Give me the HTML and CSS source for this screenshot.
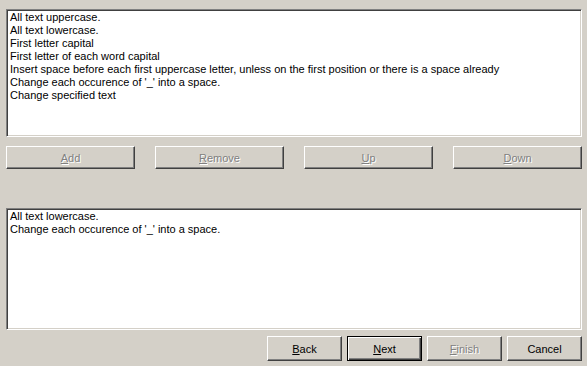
FILE: index.html
```html
<!DOCTYPE html>
<html lang="en">
<head>
    <meta charset="UTF-8">
    <title>Text Conversion Wizard</title>
    <link rel="stylesheet" href="styles.css">
</head>
<body>
    <div class="wizard">
        <ul class="listbox list-top">
            <li>All text uppercase.</li>
            <li>All text lowercase.</li>
            <li>First letter capital</li>
            <li>First letter of each word capital</li>
            <li>Insert space before each first uppercase letter, unless on the first position or there is a space already</li>
            <li>Change each occurence of '_' into a space.</li>
            <li>Change specified text</li>
        </ul>

        <div class="edit-buttons">
            <button class="btn" disabled><u>A</u>dd</button>
            <button class="btn" disabled><u>R</u>emove</button>
            <button class="btn" disabled><u>U</u>p</button>
            <button class="btn" disabled><u>D</u>own</button>
        </div>

        <ul class="listbox list-bottom">
            <li>All text lowercase.</li>
            <li>Change each occurence of '_' into a space.</li>
        </ul>

        <div class="nav-buttons">
            <button class="btn"><u>B</u>ack</button>
            <button class="btn default"><u>N</u>ext</button>
            <button class="btn" disabled><u>F</u>inish</button>
            <button class="btn">Cancel</button>
        </div>
    </div>
</body>
</html>
```

FILE: styles.css
```css
html, body {
    margin: 0;
    padding: 0;
    background-color: #d4d0c8;
}
body {
    font-family: Tahoma, 'Liberation Sans', 'DejaVu Sans', sans-serif;
    font-size: 11px;
    color: #000;
}
.wizard {
    display: flex;
    flex-direction: column;
    width: 587px;
    height: 366px;
    box-sizing: border-box;
    padding: 9px 5px 0 6px;
}
.listbox {
    list-style: none;
    margin: 0;
    padding: 0 2px;
    background-color: #fff;
    border: 1px solid;
    border-color: #808080 #fff #fff #808080;
    box-shadow: inset 1px 1px #404040, inset -1px -1px #d4d0c8;
    box-sizing: border-box;
    overflow: hidden;
}
.listbox li {
    line-height: 13px;
    padding-left: 1px;
    white-space: nowrap;
}
.list-top {
    height: 128px;
    padding-top: 1px;
}
.list-bottom {
    height: 122px;
    margin-top: 39px;
    padding-top: 1px;
}
.btn {
    font-family: inherit;
    font-size: 11px;
    color: #000;
    background-color: #d4d0c8;
    border: 1px solid;
    border-color: #fff #404040 #404040 #fff;
    box-shadow: inset -1px -1px #808080;
    border-radius: 0;
    padding: 0;
    margin: 0;
    box-sizing: border-box;
}
.btn:disabled {
    color: #808080;
    text-shadow: 1px 1px #fff;
}
.btn.default {
    border-color: #000;
    box-shadow: inset 1px 1px #fff, inset -1px -1px #404040, inset -2px -2px #808080;
}
.edit-buttons {
    display: flex;
    justify-content: space-between;
    margin-top: 9px;
}
.edit-buttons .btn {
    width: 129px;
    height: 23px;
}
.nav-buttons {
    display: flex;
    justify-content: flex-end;
    gap: 5px;
    margin-top: 6px;
}
.nav-buttons .btn {
    width: 75px;
    height: 25px;
}
```
